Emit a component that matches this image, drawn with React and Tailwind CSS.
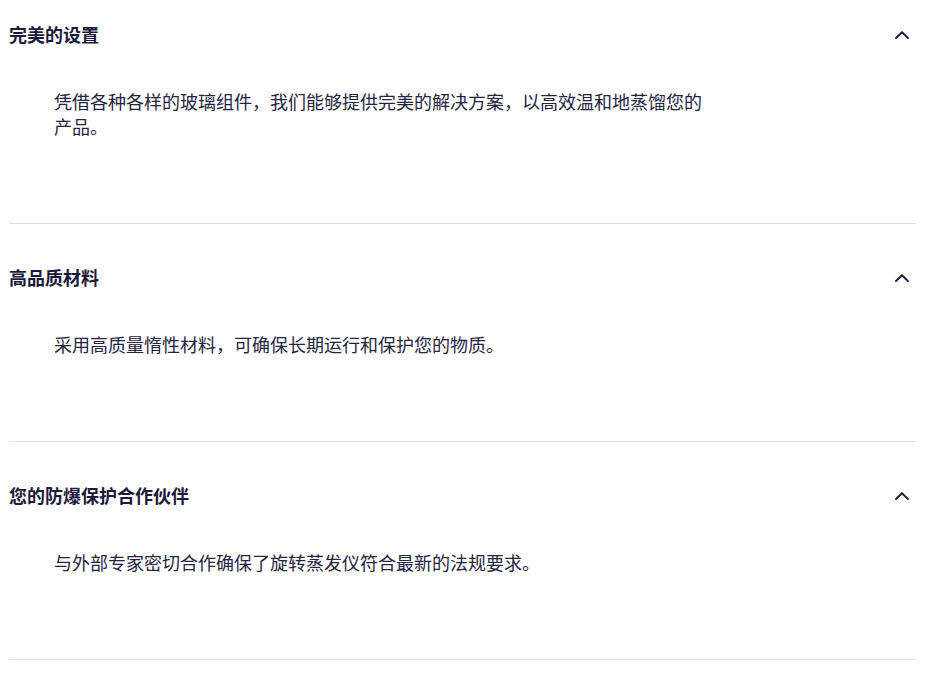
import { useState } from 'react'

const items = [
  {
    title: '完美的设置',
    body: '凭借各种各样的玻璃组件，我们能够提供完美的解决方案，以高效温和地蒸馏您的产品。',
  },
  {
    title: '高品质材料',
    body: '采用高质量惰性材料，可确保长期运行和保护您的物质。',
  },
  {
    title: '您的防爆保护合作伙伴',
    body: '与外部专家密切合作确保了旋转蒸发仪符合最新的法规要求。',
  },
]

function Chevron({ open }) {
  return (
    <svg
      width="14"
      height="8"
      viewBox="0 0 14 8"
      fill="none"
      className={open ? '' : 'rotate-180'}
    >
      <polyline points="1,7 7,1.2 13,7" stroke="#1c1a3c" strokeWidth="1.9" strokeLinecap="square" />
    </svg>
  )
}

export default function App() {
  const [open, setOpen] = useState([true, true, true])

  const toggle = (i) => setOpen((o) => o.map((v, j) => (j === i ? !v : v)))

  return (
    <div
      className="min-h-[673px] bg-white pl-[9px] w-[916px]"
      style={{ fontFamily: '"Noto Sans CJK SC", "Noto Sans", sans-serif' }}
    >
      {items.map((item, i) => (
        <div key={item.title} className="border-b border-[#dfdfdf]">
          {/* Header */}
          <button
            onClick={() => toggle(i)}
            className={
              'flex w-full items-center justify-between pr-[7px] text-left ' +
              (i === 0 ? 'pt-[21px]' : 'pt-[40px]')
            }
          >
            <span className="text-[18px] leading-[27px] font-bold text-[#1c1a3c]">{item.title}</span>
            <Chevron open={open[i]} />
          </button>

          {/* Body */}
          {open[i] && (
            <div className="pl-[45px] pt-[41px] pb-[84px]">
              <p className="max-w-[660px] text-[18px] leading-[25px] text-[#25243f]">{item.body}</p>
            </div>
          )}
        </div>
      ))}
    </div>
  )
}
